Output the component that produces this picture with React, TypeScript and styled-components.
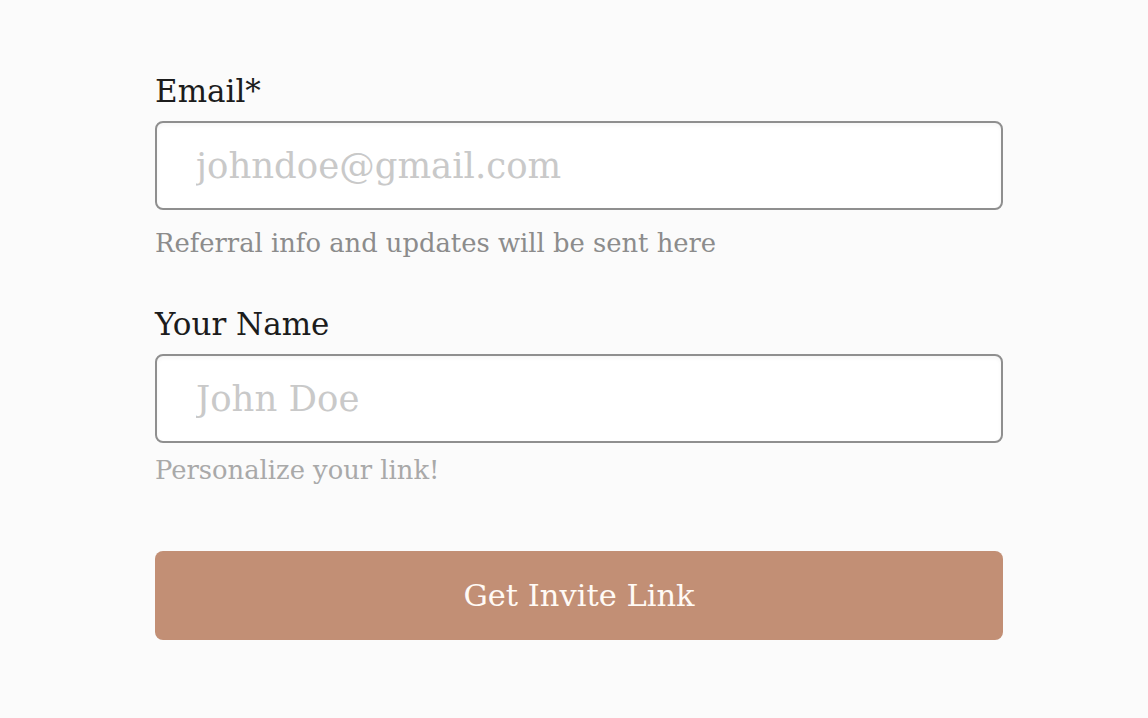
import React from "react";
import styled, { createGlobalStyle } from "styled-components";

const Global = createGlobalStyle`
  html, body { margin: 0; padding: 0; background: #fbfbfb; }
  body { font-family: "DejaVu Serif", "Liberation Serif", serif; }
  * { box-sizing: border-box; }
`;

const Page = styled.div`
  min-height: 718px;
  padding: 66px 0 0 155px;
`;

const Form = styled.form`
  width: 848px;
  display: flex;
  flex-direction: column;
`;

const Field = styled.div<{ $after: number }>`
  display: flex;
  flex-direction: column;
  margin-bottom: ${(p) => p.$after}px;
`;

const Label = styled.label`
  font-size: 31px;
  line-height: 50px;
  color: #1c1c1c;
  margin-bottom: 5px;
`;

const Input = styled.input`
  height: 89px;
  border: 2px solid #8f8f8f;
  border-radius: 8px;
  background: #ffffff;
  padding: 0 0 0 39px;
  font-family: inherit;
  font-size: 35.5px;
  color: #333;
  box-shadow: inset 0 2px 4px rgba(0, 0, 0, 0.04);
  outline: none;
  &::placeholder { color: #c9c9c9; }
`;

const Hint = styled.div<{ $light?: boolean }>`
  font-size: 25.8px;
  line-height: 30px;
  margin-top: ${(p) => (p.$light ? 12 : 18)}px;
  color: ${(p) => (p.$light ? "#a9a9a9" : "#8c8c8c")};
`;

const Button = styled.button`
  height: 89px;
  border: none;
  border-radius: 8px;
  background: #c28f75;
  color: #fffaf5;
  font-family: inherit;
  font-size: 30.5px;
  cursor: pointer;
`;

export default function App() {
  return (
    <Page>
      <Global />
      <Form onSubmit={(e) => e.preventDefault()}>
        <Field $after={41}>
          <Label>Email*</Label>
          <Input type="email" placeholder="johndoe@gmail.com" />
          <Hint>Referral info and updates will be sent here</Hint>
        </Field>
        <Field $after={66}>
          <Label>Your Name</Label>
          <Input type="text" placeholder="John Doe" />
          <Hint $light>Personalize your link!</Hint>
        </Field>
        <Button type="submit">Get Invite Link</Button>
      </Form>
    </Page>
  );
}
